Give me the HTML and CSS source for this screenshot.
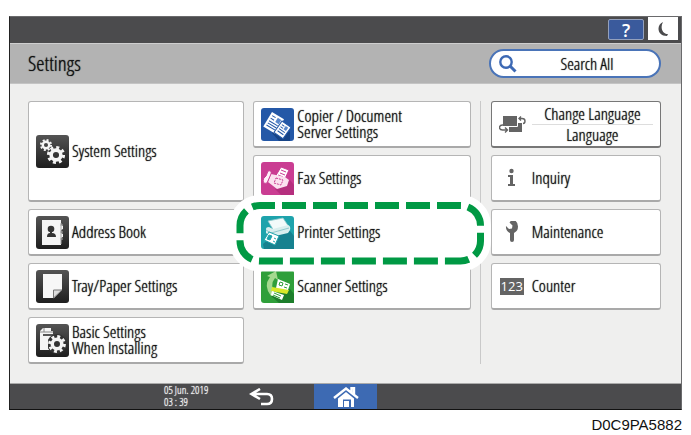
FILE: index.html
```html
<!DOCTYPE html>
<html lang="en">
<head>
<meta charset="utf-8">
<title>Settings</title>
<link rel="stylesheet" href="styles.css">
</head>
<body>
<svg width="0" height="0" class="defs" aria-hidden="true">
  <defs>
    <linearGradient id="dark" x1="0" y1="0" x2="0" y2="1"><stop offset="0" stop-color="#545454"/><stop offset="1" stop-color="#1e1e1e"/></linearGradient>
    <g id="gear">
      <circle r="5.4" fill="none" stroke="#f4f4f4" stroke-width="4"/>
      <circle r="8.4" fill="none" stroke="#f4f4f4" stroke-width="3.400" stroke-dasharray="3.3 3.297"/>
    </g>
  </defs>
</svg>
<figure class="figure">
  <div class="screen">
    <header class="topbar">
      <button class="help" type="button" aria-label="Help">?</button>
      <button class="sleep" type="button" aria-label="Sleep">
        <svg width="12" height="16" viewBox="0 0 12 16"><path d="M6 1C-1 4 0 15 10 15L11 13C5 13 3 6 6 1Z" fill="#4b4b4d"/></svg>
      </button>
    </header>
    <div class="titlebar">
      <h1>Settings</h1>
      <button class="search" type="button">
        <svg width="18" height="18" viewBox="0 0 18 18" fill="none" stroke="#3d69b4"><circle cx="7" cy="7" r="5.7" stroke-width="2.4"/><path d="M11 11l5.5 5.5" stroke-width="3"/></svg>
        <span>Search All</span>
      </button>
    </div>
    <main class="content">
      <div class="column">
        <button class="card tall" type="button">
          <svg class="icon" viewBox="0 0 33 33"><rect width="33" height="33" rx="3" fill="url(#dark)"/><use href="#gear" transform="translate(10 10) scale(.6)"/><use href="#gear" transform="translate(20 20) scale(.9)"/></svg>
          <span>System Settings</span>
        </button>
        <button class="card" type="button">
          <svg class="icon" viewBox="0 0 33 33"><rect width="33" height="33" rx="3" fill="url(#dark)"/><path d="M6 4H25V9l2 1v3l-2 1v3l2 1v3l-2 1v7H6Z" fill="#f4f4f4"/><path d="M25 7v21M24 9h3M24 16h3M24 23h3" stroke="#aaa" fill="none"/><circle cx="15" cy="13" r="3.3" fill="#333"/><path d="M14 15h2v2q4 0 4 4H11q0-4 3-4Z" fill="#333"/></svg>
          <span>Address Book</span>
        </button>
        <button class="card" type="button">
          <svg class="icon" viewBox="0 0 33 33"><rect width="33" height="33" rx="3" fill="url(#dark)"/><path d="M7 4H26V20L18 28H7Z" fill="#f7f7f7"/><path d="M17.500 28V20H26Z" fill="#ddd" stroke="#777"/></svg>
          <span>Tray/Paper Settings</span>
        </button>
        <button class="card" type="button">
          <svg class="icon" viewBox="0 0 33 33"><rect width="33" height="33" rx="3" fill="url(#dark)"/><path d="M4 7l3-3h8v3h2v19H4Z" fill="#f4f4f4"/><path d="M4 8h13M8 4v4" stroke="#888" fill="none"/><path d="M7 10h10v2H7Z" fill="#555"/><circle cx="21" cy="20" r="10" fill="#333"/><path d="M4 14h8v12H4Z" fill="#f4f4f4"/><use href="#gear" transform="translate(21 20) scale(.88)"/></svg>
          <span>Basic Settings<br>When Installing</span>
        </button>
      </div>
      <div class="column">
        <button class="card" type="button">
          <svg class="icon" viewBox="0 0 33 33"><rect width="33" height="33" rx="3" fill="#2458a7"/><path d="M11 25l3-5 6 9 9-6v10H18Z" fill="#174486"/><g transform="translate(11 4) rotate(31)"><rect width="14" height="17" fill="#fff"/><path d="M2 3h4M2 6h4M2 9h10M2 11.500h10M2 14h10" stroke="#2458a7"/><rect x="8" y="2" width="4" height="5" fill="#5b88ca"/></g><g transform="translate(21 13) rotate(35)"><rect width="11" height="14" fill="#fff" stroke="#2458a7"/><path d="M2 3h3M2 5.500h3M2 8h7M2 10.500h7" stroke="#2458a7"/><rect x="6" y="2" width="3" height="4" fill="#5b88ca"/></g></svg>
          <span>Copier / Document<br>Server Settings</span>
        </button>
        <button class="card" type="button">
          <svg class="icon" viewBox="0 0 33 33"><rect width="33" height="33" rx="3" fill="#ca3d92"/><path d="M14 27l15-9 4 5v10H20Z" fill="#b52f7e"/><path d="M20 5l8 3-5 11-9-4Z" fill="#fff" stroke="#ca3d92"/><path d="M20 8l5 2M19 11l5 2M17 13l5 2" stroke="#ca3d92"/><path d="M10 12l14 3 4 3-2 6-10 3-9-7Z" fill="#fbe1ef"/><path d="M15 16l7 2-2 5-7-2Z" fill="none" stroke="#ca3d92" stroke-dasharray="2 1"/><path d="M7 9q4-1 3 3L6 21q-3 2-4-2 0-3 3-5Z" fill="#fff0f8" stroke="#ca3d92"/></svg>
          <span>Fax Settings</span>
        </button>
        <div class="highlighted">
          <svg class="marker" viewBox="0 0 262 78" aria-hidden="true"><rect x="10" y="10.500" width="240.500" height="55.500" rx="20" class="halo"/><rect x="10" y="10.500" width="240.500" height="55.500" rx="20" class="dashes"/></svg>
          <button class="card plain" type="button">
            <svg class="icon" viewBox="0 0 33 33"><rect width="33" height="33" rx="3" fill="#1ea3ac"/><path d="M2 28l7-6 20-7 4 5v13H3Z" fill="#16818f"/><path d="M7 5l15-3 6 9-15 4Z" fill="#f2fafa" stroke="#8fc9cd" stroke-width=".8"/><path d="M5 13q0-2 3-2l4 2 15-4q3 1 2 5l-2 3-17 4-5-4Z" fill="#d9eeee"/><path d="M5 14l5 3 18-5" fill="none" stroke="#8fc9cd"/><path d="M8 16l10 4-4 9-11-5Z" fill="#fff" stroke="#1ea3ac"/><path d="M8 19l3 1-2 4-3-1ZM13 22l2 1M12 25l2 1" fill="#1ea3ac" stroke="#1ea3ac"/></svg>
            <span>Printer Settings</span>
          </button>
        </div>
        <button class="card" type="button">
          <svg class="icon" viewBox="0 0 33 33"><rect width="33" height="33" rx="3" fill="#2f9f3a"/><path d="M9 25l20-6 4 5v9H18Z" fill="#1d7e2b"/><path d="M10 26Q2 16 9 7L6 6l9-5 2 9-3-2q-6 7 1 17Z" fill="#a5d98f"/><path d="M17 9l12 5-3 9-11-5Z" fill="#fff"/><path d="M19 12l3 1-1 3-3-1ZM24 14l3 1M23 17l3 1" stroke="#2f9f3a" fill="none"/><path d="M11 17l17 3-2 4-16-3Z" fill="#d8e828"/><path d="M11 21l12 4-2 5-11-5Z" fill="#fff"/><path d="M13 23l7 3M12 25l7 3" stroke="#2f9f3a"/></svg>
          <span>Scanner Settings</span>
        </button>
      </div>
      <aside class="column side">
        <button class="card item language" type="button">
          <svg class="glyph" width="28" height="18" viewBox="0 0 28 18"><path d="M10 11h8V8h5v9H10Z" fill="#646464"/><rect x="4" y="1" width="14" height="10" fill="#646464"/><path d="M10 11.500h8.500V8" fill="none" stroke="#fff"/><path d="M20 3.500h3q3 0 3 2.500T24 8.500M22 1.500L20 3.500l2 2M4 10H3.500q-3 0-3 2.500T3.500 15H8M6 12.500L8.500 15 6 17.500" fill="none" stroke="#646464" stroke-width="1.400"/></svg>
          <span class="pair"><span>Change Language</span><span>Language</span></span>
        </button>
        <button class="card item" type="button">
          <svg class="glyph" width="28" height="20" viewBox="0 0 28 20"><circle cx="12.500" cy="3" r="2.200" fill="#646464"/><path d="M9 7h5v9h2v2H9v-2h2V9H9Z" fill="#646464"/></svg>
          <span>Inquiry</span>
        </button>
        <button class="card item" type="button">
          <svg class="glyph" width="28" height="22" viewBox="0 0 28 22"><path d="M10.500 1.500l3 3-.5 3-3 .5-3-3q-.5 5 4 7v7q0 2 2 2t2-2v-7q4-2 4-6.500 0-6-6-7Z" fill="#646464"/></svg>
          <span>Maintenance</span>
        </button>
        <button class="card item" type="button">
          <span class="digits">123</span>
          <span>Counter</span>
        </button>
      </aside>
    </main>
    <footer class="bottombar">
      <time datetime="2019-06-05T03:39">05 Jun. 2019<br>03 : 39</time>
      <button class="nav back" type="button" aria-label="Back"><svg width="26" height="18" viewBox="0 0 26 18" fill="none" stroke="#fff" stroke-width="2.600"><path d="M11 1L2.500 6 11 11M3 6h15q5 0 5 5t-5 5h-6"/></svg></button>
      <button class="nav home" type="button" aria-label="Home"><svg width="26" height="20" viewBox="0 0 26 20"><path d="M1 11L13 1.500 25 11M18.500 5V1h2.500v6" fill="none" stroke="#fff" stroke-width="2.400"/><path d="M5 11.500l8-6.500 8 6.500V20h-3v-7.500H10V20H5Z" fill="#fff"/><rect x="11" y="14" width="5" height="6" fill="#fff"/></svg></button>
    </footer>
  </div>
  <figcaption>D0C9PA5882</figcaption>
</figure>
</body>
</html>
```
FILE: styles.css
```css
* {
  box-sizing: border-box;
}

body {
  margin: 0;
  background: #fff;
  color: #111;
  font-family: "Open Sans Condensed Light", "Open Sans Condensed", "Roboto Condensed", sans-serif;
  font-size: 17px;
  font-weight: 300;
}

button {
  margin: 0;
  padding: 0;
  border: 0;
  color: inherit;
  font: inherit;
  text-shadow: inherit;
}

svg {
  display: block;
  flex: none;
}

.defs {
  position: absolute;
}

.figure {
  margin: 16px 9px 0;
}

.screen {
  border: 1px solid #6a6a6c;
  border-left-color: #222;
  border-bottom-color: #111;
  text-shadow: 0 0 1px currentColor;
}

.topbar {
  display: flex;
  justify-content: flex-end;
  gap: 4px;
  height: 26px;
  padding-right: 3px;
  background: #4b4b4d;
}

.help {
  width: 36px;
  height: 21px;
  margin-top: 2px;
  border: 1px solid #93a0bd;
  border-radius: 2px;
  background: #3a5a9c;
  color: #fff;
  font: 600 18px/18px "Open Sans", sans-serif;
  text-shadow: none;
}

.sleep {
  display: grid;
  place-items: center;
  width: 30px;
  height: 23px;
  background: #fff;
}

.titlebar {
  display: flex;
  align-items: center;
  justify-content: space-between;
  height: 41px;
  padding: 0 20px 0 18px;
  border-top: 1px solid #cfcfcf;
  border-bottom: 1px solid #c4c4c4;
  background: #b3b3b3;
}

h1 {
  margin: 0;
  padding-bottom: 2px;
  font-size: 21px;
  font-weight: 300;
}

.search {
  display: flex;
  align-items: center;
  width: 172px;
  height: 29px;
  padding: 0 10px 0 8px;
  border: 2px solid #4a74b8;
  border-radius: 15px;
  background: #fff;
}

.search span {
  flex: 1;
  padding-left: 8px;
}

.content {
  display: grid;
  grid-template-columns: 216fr 217fr 181fr;
  column-gap: 9px;
  padding: 17px 20px 19px 18px;
  background: #efefee;
}

.column {
  display: flex;
  flex-direction: column;
  gap: 7px;
}

.side {
  padding-left: 10px;
  border-left: 1px solid #c9c9c9;
}

.card {
  display: flex;
  align-items: center;
  gap: 3px;
  width: 100%;
  height: 47px;
  padding: 0 7px;
  border: 1px solid #b5b5b5;
  border-bottom: 2px solid #a9a9a9;
  border-radius: 3px;
  background: #fff;
  line-height: 16px;
  text-align: left;
}

.tall {
  height: 101px;
}

.icon {
  width: 33px;
  height: 33px;
}

.highlighted {
  position: relative;
}

.marker {
  position: absolute;
  top: -14px;
  left: -23px;
  width: 262px;
  height: 78px;
}

.halo,
.dashes {
  fill: #fff;
  stroke: #fff;
  stroke-width: 21px;
}

.dashes {
  stroke: #009944;
  stroke-width: 7px;
  stroke-dasharray: 24 7;
  stroke-dashoffset: 9px;
}

.plain {
  position: relative;
  border-color: transparent;
  background: none;
}

.item {
  gap: 5px;
}

.language {
  border-color: #777;
}

.glyph {
  width: 28px;
}

.pair {
  display: grid;
  flex: 1;
  line-height: 20px;
  text-align: center;
}

.pair span + span {
  border-top: 1px solid #ddd;
}

.digits {
  width: 24px;
  margin: 0 3px 0 1px;
  background: #646464;
  color: #fff;
  font: 13px/17px "Open Sans", sans-serif;
  text-align: center;
  text-shadow: none;
}

.bottombar {
  display: grid;
  grid-template-columns: 214fr 90fr 63fr 304fr;
  height: 26px;
  border-top: 1px solid #aaa;
  background: #4b4b4d;
  color: #fff;
}

time {
  justify-self: end;
  width: 60px;
  font-size: 11px;
  line-height: 12px;
}

.nav {
  display: grid;
  place-items: center;
  background: none;
}

.back {
  padding-right: 14px;
}

.home {
  background: #3d6ab3;
}

figcaption {
  padding-top: 6px;
  font: 15px/18px "Liberation Sans", Arial, sans-serif;
  text-align: right;
}
```
